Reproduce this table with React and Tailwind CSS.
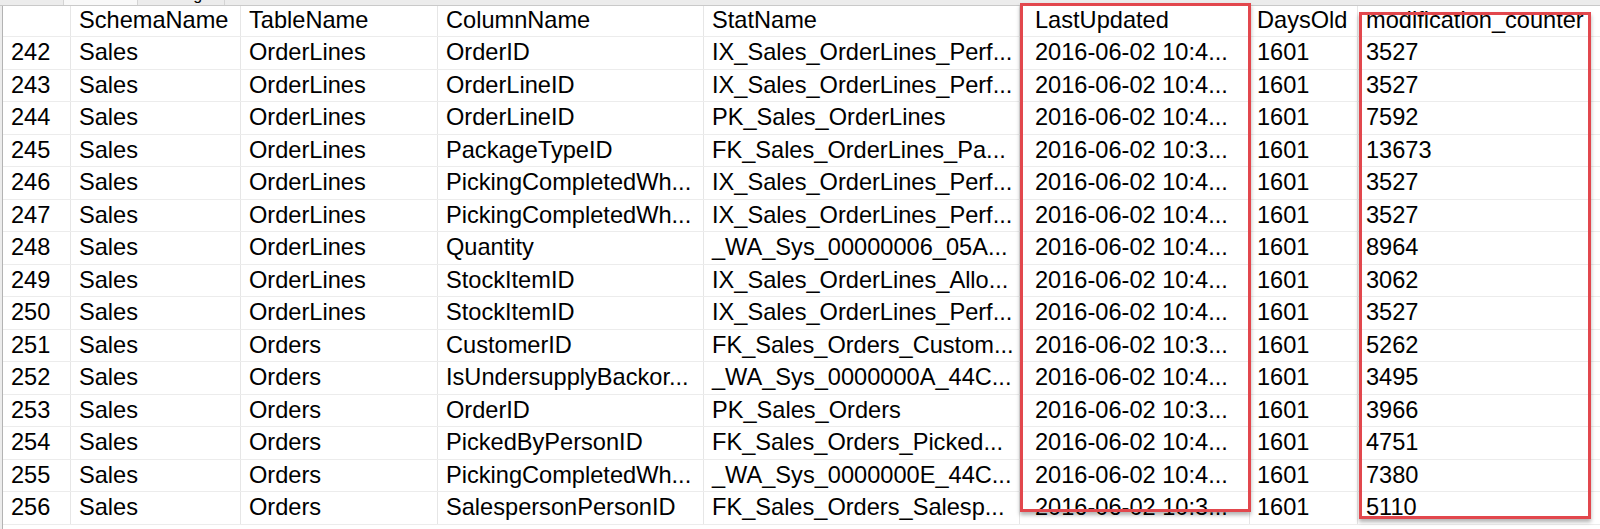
import React from "react";

const cols = [
  { w: "w-[68px]", pad: "pl-2" },
  { w: "w-[170px]", pad: "pl-2" },
  { w: "w-[197px]", pad: "pl-2" },
  { w: "w-[266px]", pad: "pl-2" },
  { w: "w-[316px]", pad: "pl-2" },
  { w: "w-[230px]", pad: "pl-[15px]" },
  { w: "w-[108px]", pad: "pl-[7px]" },
  { w: "w-[260px]", pad: "pl-2" },
];

const header = ["", "SchemaName", "TableName", "ColumnName", "StatName", "LastUpdated", "DaysOld", "modification_counter"];

const rows = [
  ["242", "Sales", "OrderLines", "OrderID", "IX_Sales_OrderLines_Perf...", "2016-06-02 10:4...", "1601", "3527"],
  ["243", "Sales", "OrderLines", "OrderLineID", "IX_Sales_OrderLines_Perf...", "2016-06-02 10:4...", "1601", "3527"],
  ["244", "Sales", "OrderLines", "OrderLineID", "PK_Sales_OrderLines", "2016-06-02 10:4...", "1601", "7592"],
  ["245", "Sales", "OrderLines", "PackageTypeID", "FK_Sales_OrderLines_Pa...", "2016-06-02 10:3...", "1601", "13673"],
  ["246", "Sales", "OrderLines", "PickingCompletedWh...", "IX_Sales_OrderLines_Perf...", "2016-06-02 10:4...", "1601", "3527"],
  ["247", "Sales", "OrderLines", "PickingCompletedWh...", "IX_Sales_OrderLines_Perf...", "2016-06-02 10:4...", "1601", "3527"],
  ["248", "Sales", "OrderLines", "Quantity", "_WA_Sys_00000006_05A...", "2016-06-02 10:4...", "1601", "8964"],
  ["249", "Sales", "OrderLines", "StockItemID", "IX_Sales_OrderLines_Allo...", "2016-06-02 10:4...", "1601", "3062"],
  ["250", "Sales", "OrderLines", "StockItemID", "IX_Sales_OrderLines_Perf...", "2016-06-02 10:4...", "1601", "3527"],
  ["251", "Sales", "Orders", "CustomerID", "FK_Sales_Orders_Custom...", "2016-06-02 10:3...", "1601", "5262"],
  ["252", "Sales", "Orders", "IsUndersupplyBackor...", "_WA_Sys_0000000A_44C...", "2016-06-02 10:4...", "1601", "3495"],
  ["253", "Sales", "Orders", "OrderID", "PK_Sales_Orders", "2016-06-02 10:3...", "1601", "3966"],
  ["254", "Sales", "Orders", "PickedByPersonID", "FK_Sales_Orders_Picked...", "2016-06-02 10:4...", "1601", "4751"],
  ["255", "Sales", "Orders", "PickingCompletedWh...", "_WA_Sys_0000000E_44C...", "2016-06-02 10:4...", "1601", "7380"],
  ["256", "Sales", "Orders", "SalespersonPersonID", "FK_Sales_Orders_Salesp...", "2016-06-02 10:3...", "1601", "5110"],
];

function Row({ cells, header: isHeader }) {
  return (
    <div className={`flex ${isHeader ? "h-[31px]" : "h-[32.5px]"} border-b border-[#ececec]`}>
      {cells.map((c, i) => (
        <div
          key={i}
          className={`${cols[i].w} ${cols[i].pad} shrink-0 flex items-center border-r border-[#e6e6e6] whitespace-nowrap overflow-hidden`}
        >
          {c}
        </div>
      ))}
    </div>
  );
}

export default function App() {
  return (
    <div
      className="relative w-[1600px] h-[529px] overflow-hidden bg-white text-[23.6px] text-black"
      style={{ fontFamily: '"Liberation Sans", Arial, sans-serif' }}
    >
      {/* tab strip, mostly scrolled out of view */}
      <div className="flex h-[6px] bg-[#ececec] border-b border-[#c9c9c9] overflow-hidden text-[16px] leading-none">
        <div className="w-[63px]" />
        <div className="w-[75px] bg-[#f8f8f8] border-x border-[#d4d4d4] pl-2">
          <div className="mt-[-13.5px]">Results</div>
        </div>
        <div className="w-[87px] border-r border-[#d4d4d4] pl-2">
          <div className="mt-[-13.5px]">Messages</div>
        </div>
      </div>

      <div className="flex">
        <div className="w-[3px] bg-[#ececec] border-r border-[#b3b3b3] shrink-0 h-[530px]" />
        <div className="flex flex-col">
          <Row cells={header} header />
          {rows.map((r) => (
            <Row key={r[0]} cells={r} />
          ))}
        </div>
      </div>

      {/* highlight boxes */}
      <div className="absolute left-[1020px] top-[3px] w-[231px] h-[509px] border-[3px] border-[#e2474d] shadow-[0_3px_4px_rgba(0,0,0,0.3)]" />
      <div className="absolute left-[1359px] top-[12px] w-[232px] h-[507px] border-[3px] border-[#e2474d] shadow-[0_3px_4px_rgba(0,0,0,0.3)]" />
    </div>
  );
}
